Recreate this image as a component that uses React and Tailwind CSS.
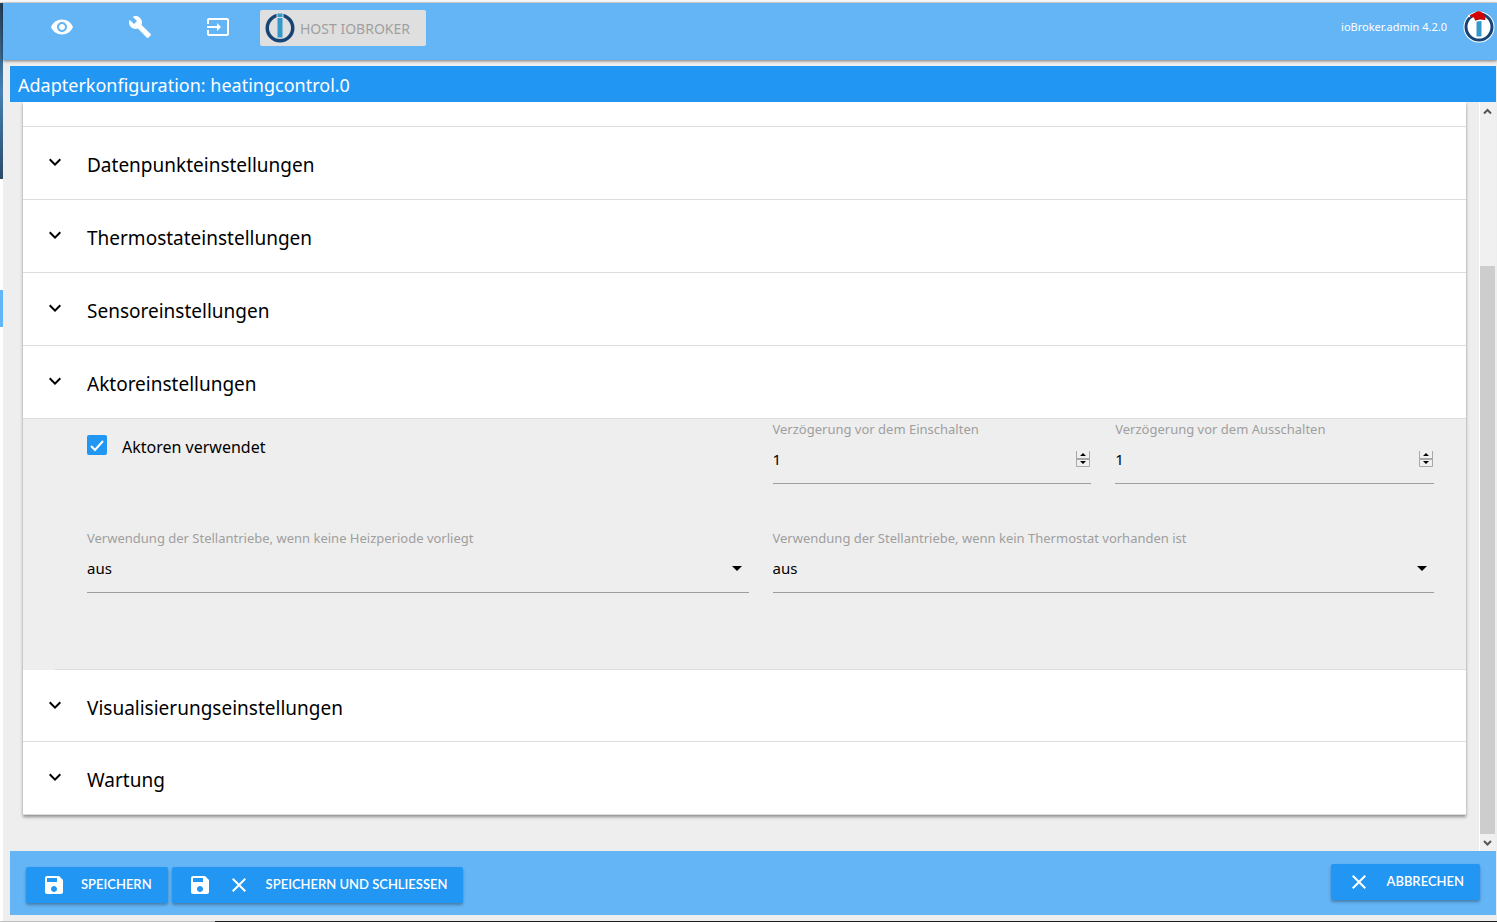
import { useState } from 'react';
import { MdVisibility, MdBuild, MdInput, MdSave, MdClose, MdExpandMore, MdArrowDropDown } from 'react-icons/md';

const IoBrokerLogo = ({ santa = false, className }) => (
  <svg viewBox="0 0 32 32" className={className} aria-hidden="true">
    {santa ? (
      <>
        <circle cx="16" cy="16" r="15.5" fill="#ffffff" />
        <circle cx="16" cy="16" r="13" fill="none" stroke="#164477" strokeWidth="3" />
        <path d="M13.5 10.500L18.500 10V25.500H13.500Z" fill="#3399cc" />
        <path d="M6 4.500Q10 3 13 1Q16 -0.500 19 1.500Q22 3 22.500 9Q18 7 12 9.500L11 6.500Q8 6.500 6 4.500Z" fill="#d40000" />
        <path d="M12 9Q17 7 22 8.500" stroke="#a80000" strokeWidth="1" fill="none" />
        <circle cx="6" cy="5" r="1.2" fill="#ffffff" />
      </>
    ) : (
      <>
        <circle cx="16" cy="16" r="12.75" fill="none" stroke="#164477" strokeWidth="3.5" />
        <rect x="12.5" y="1" width="7" height="5" fill="#dfdfdf" />
        <rect x="13.5" y="1.5" width="5" height="3.5" fill="#3399cc" />
        <rect x="13.5" y="6" width="5" height="19.500" fill="#3399cc" />
      </>
    )}
  </svg>
);

const AccordionHeader = ({ title, open = false, className = 'h-[73px]' }) => (
  <button
    type="button"
    aria-expanded={open}
    className={`flex w-full items-center gap-5 border-b border-[#dddddd] bg-white pl-5 text-left text-black ${className}`}
  >
    <MdExpandMore className="mb-0.5 size-6" />
    <span className="pt-1 text-[19px] leading-7">{title}</span>
  </button>
);

const NumberField = ({ id, label }) => {
  const [value, setValue] = useState(1);

  return (
    <div>
      <label htmlFor={id} className="block h-5 text-[13px] leading-5 text-[#9e9e9e]">{label}</label>
      <div className="flex h-[45px] items-center border-b border-[#9e9e9e] pr-px pb-1">
        <input
          id={id}
          type="number"
          value={value}
          onChange={(e) => setValue(e.target.value)}
          className="min-w-0 flex-1 bg-transparent text-[15px] text-black outline-none [appearance:textfield] [&::-webkit-inner-spin-button]:appearance-none"
        />
        <svg viewBox="0 0 14 16" className="h-4 w-[14px]" aria-hidden="true">
          <rect width="14" height="16" fill="#f0f0f0" />
          <path d="M.5 0V15.5H13.5V0" fill="none" stroke="#a8a8a8" />
          <path d="M0 8H14" stroke="#a8a8a8" strokeWidth="2" />
          <path d="M4 5H10L7 2Z M4 10H10L7 13Z" fill="#000000" />
        </svg>
      </div>
    </div>
  );
};

const SelectField = ({ id, label }) => (
  <div className="col-span-2">
    <label htmlFor={id} className="block h-5 text-[13px] leading-5 text-[#9e9e9e]">{label}</label>
    <div className="relative h-[45px] border-b border-[#9e9e9e] pb-1">
      <select id={id} defaultValue="aus" className="h-full w-full appearance-none bg-transparent text-[15px] text-black outline-none">
        <option value="aus">aus</option>
        <option value="ein">ein</option>
      </select>
      <MdArrowDropDown className="pointer-events-none absolute top-2 right-0 size-6 text-black" />
    </div>
  </div>
);

const ActionButton = ({ children, className = '' }) => (
  <button
    type="button"
    className={`flex h-9 items-center rounded-xs bg-[#2196f3] px-4 font-['Lato',sans-serif] text-[13px] font-semibold text-white uppercase shadow-[0_2px_3px_rgba(0,0,0,0.3)] ${className}`}
  >
    {children}
  </button>
);

const App = () => {
  const [useActors, setUseActors] = useState(true);

  return (
    <div className="flex min-h-screen flex-col bg-[#eeeeee] font-['Noto_Sans',sans-serif]">
      <div className="h-[3px] border-b border-[#dddddd] bg-[#f8f8f8]" />

      <div className="flex flex-1">
        {/* edge of the side menu */}
        <div className="flex w-[3px] shrink-0 flex-col bg-white">
          <div className="h-44 bg-linear-to-b from-[#263f59] via-[#4583b5] to-[#2c4a68]" />
          <div className="mt-[111px] h-[37px] bg-[#64b5f6]" />
        </div>

        <div className="flex min-w-0 flex-1 flex-col">
          <header className="flex h-[57px] items-center bg-[#64b5f6] pb-2 text-white shadow-[0_1px_3px_rgba(0,0,0,0.5)]">
            <nav className="flex items-center gap-[54px] pb-0.5 pl-[47px]">
              <button type="button" aria-label="Sichtbarkeit"><MdVisibility className="size-6" /></button>
              <button type="button" aria-label="Einstellungen"><MdBuild className="size-6" /></button>
              <button type="button" aria-label="Anmelden"><MdInput className="size-6" /></button>
            </nav>
            <button
              type="button"
              disabled
              className="ml-[30px] flex h-9 items-center gap-1 rounded-xs bg-[#dfdfdf] pr-4 pl-1 text-sm text-[#9f9f9f] uppercase"
            >
              <IoBrokerLogo className="size-8" />
              <span className="pt-0.5">Host ioBroker</span>
            </button>
            <span className="ml-auto pr-4 text-[11px]">ioBroker.admin 4.2.0</span>
            <IoBrokerLogo santa className="mr-0.5 mb-0.5 size-8" />
          </header>

          <section className="mt-[6px] mr-px mb-[6px] ml-[7px] flex flex-1 flex-col">
            <h1 className="flex h-9 items-center bg-[#2196f3] pt-0.5 pl-2 text-lg text-white">
              Adapterkonfiguration: heatingcontrol.0
            </h1>

            <div className="flex flex-1">
              <div className="flex-1 pr-[13px] pb-9 pl-[13px]">
                <div className="bg-white shadow-[0_2px_3px_rgba(0,0,0,0.4)]">
                  <div className="h-[25px] border-b border-[#dddddd]" />
                  <AccordionHeader title="Datenpunkteinstellungen" />
                  <AccordionHeader title="Thermostateinstellungen" />
                  <AccordionHeader title="Sensoreinstellungen" />
                  <AccordionHeader title="Aktoreinstellungen" open />

                  <div className="bg-[#eeeeee] pl-8">
                    <div className="grid h-[251px] grid-cols-4 content-start gap-x-6 gap-y-11 border-b border-[#dddddd] pr-8 pl-8">
                      <label className="col-span-2 flex items-start gap-[15px] self-start pt-4 text-base text-black">
                        <span className="grid size-5 place-items-center">
                          <input
                            type="checkbox"
                            checked={useActors}
                            onChange={(e) => setUseActors(e.target.checked)}
                            className="col-start-1 row-start-1 size-5 appearance-none rounded-xs border-2 border-[#757575] checked:border-[#2196f3] checked:bg-[#2196f3]"
                          />
                          {useActors && (
                            <svg viewBox="0 0 20 20" className="pointer-events-none col-start-1 row-start-1 size-5" aria-hidden="true">
                              <path d="M4 11L8 15L16 6" fill="none" stroke="#ffffff" strokeWidth="2" />
                            </svg>
                          )}
                        </span>
                        Aktoren verwendet
                      </label>
                      <NumberField id="delay-on" label="Verzögerung vor dem Einschalten" />
                      <NumberField id="delay-off" label="Verzögerung vor dem Ausschalten" />
                      <SelectField id="no-heating-period" label="Verwendung der Stellantriebe, wenn keine Heizperiode vorliegt" />
                      <SelectField id="no-thermostat" label="Verwendung der Stellantriebe, wenn kein Thermostat vorhanden ist" />
                    </div>
                  </div>

                  <AccordionHeader title="Visualisierungseinstellungen" className="h-[72px]" />
                  <AccordionHeader title="Wartung" />
                </div>
              </div>

              {/* scroll bar */}
              <div className="flex w-[17px] flex-col items-center border-l border-white bg-[#f0f0f0]">
                <svg viewBox="0 0 16 18" className="h-[18px] w-4" aria-hidden="true">
                  <path d="M4 11.5L7.5 8L11 11.5" fill="none" stroke="#555555" strokeWidth="2" />
                </svg>
                <div className="mt-[146px] w-[15px] flex-1 self-start bg-[#cdcdcd]" />
                <svg viewBox="0 0 16 17" className="h-[17px] w-4" aria-hidden="true">
                  <path d="M4 7L7.5 10.5L11 7" fill="none" stroke="#555555" strokeWidth="2" />
                </svg>
              </div>
            </div>

            <footer className="flex h-16 items-start gap-1 bg-[#64b5f6] pr-4 pl-4">
              <ActionButton className="mt-4">
                <MdSave className="size-6" />
                <span className="ml-[15px]">Speichern</span>
              </ActionButton>
              <ActionButton className="mt-4">
                <MdSave className="size-6" />
                <MdClose className="ml-[15px] size-6" />
                <span className="ml-[15px]">Speichern und schliessen</span>
              </ActionButton>
              <ActionButton className="mt-[13px] ml-auto">
                <MdClose className="size-6" />
                <span className="ml-[15px]">Abbrechen</span>
              </ActionButton>
            </footer>
          </section>
        </div>
      </div>

      <div className="flex h-px">
        <div className="w-[215px] bg-[#bdbdbd]" />
        <div className="flex-1 bg-[#1c1c1c]" />
      </div>
    </div>
  );
};

export default App;
